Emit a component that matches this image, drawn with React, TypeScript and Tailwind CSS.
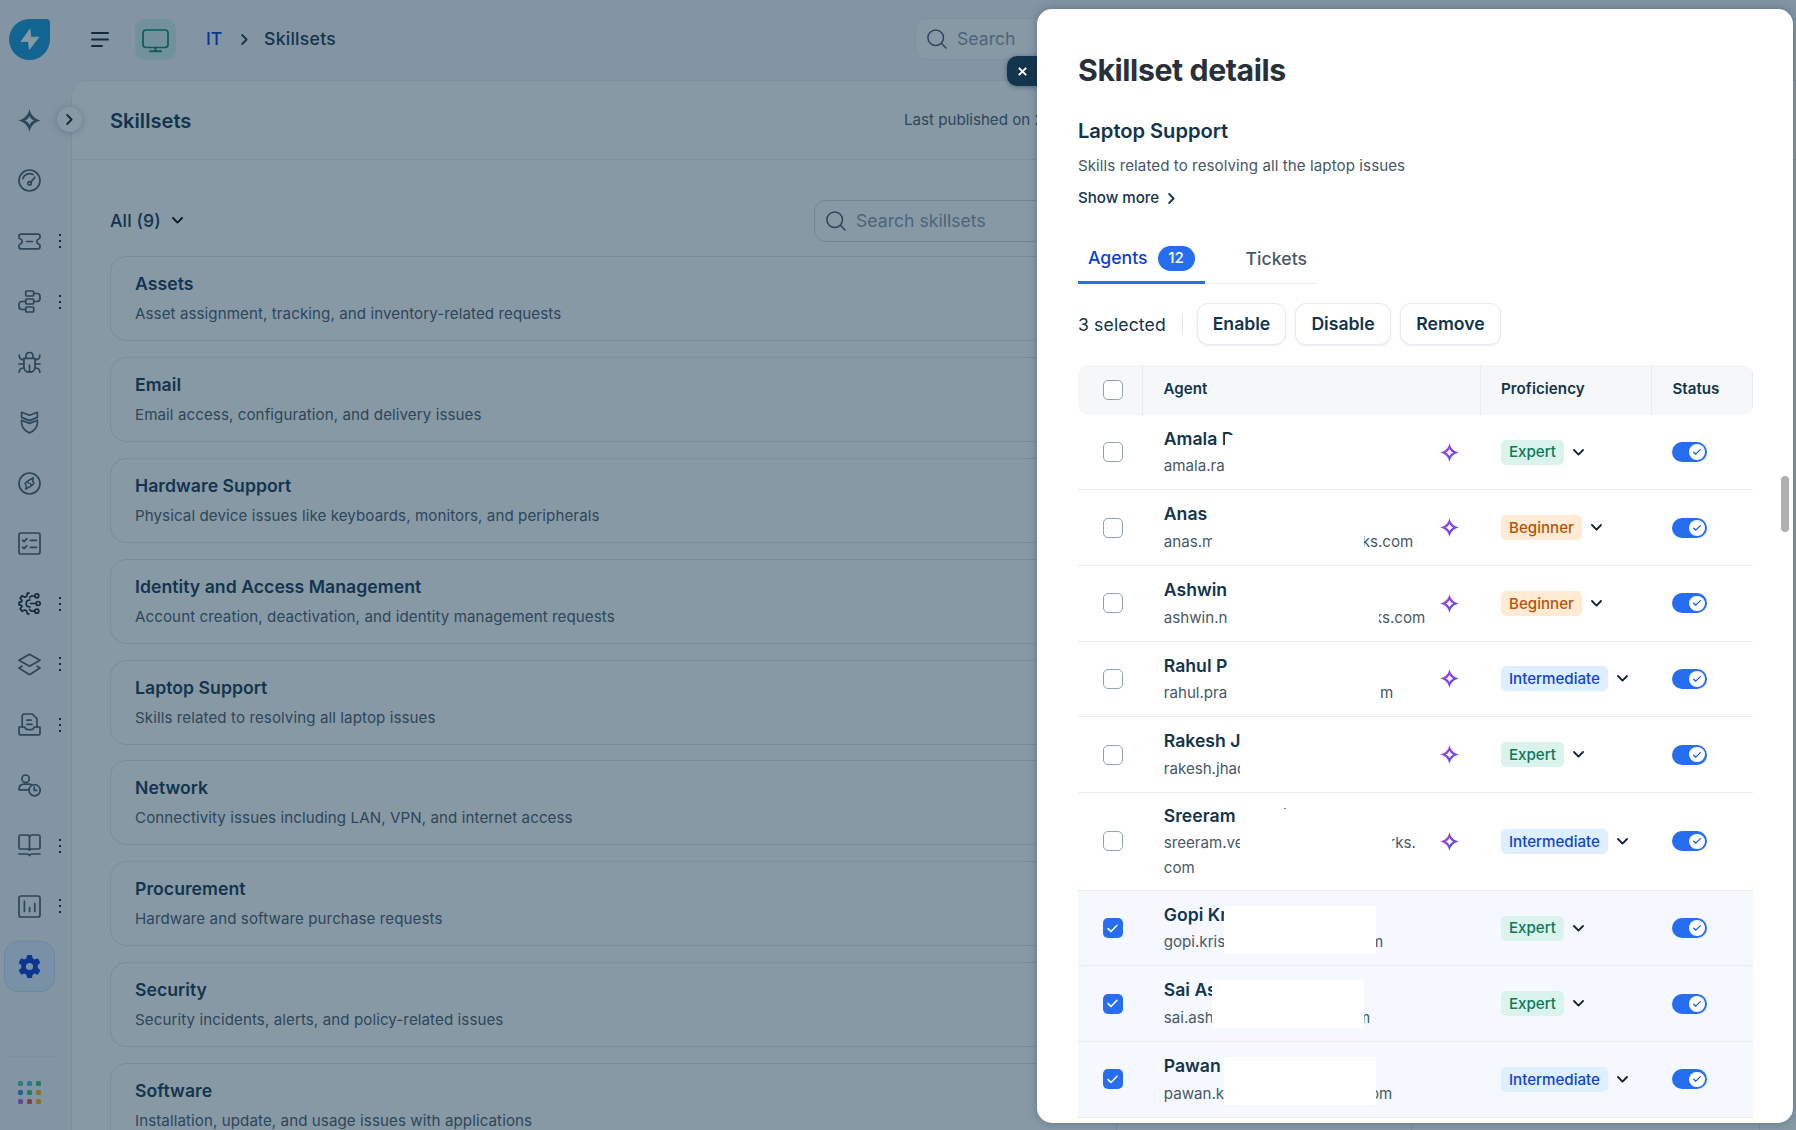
import React from "react";

const svgProps = {
  fill: "none",
  stroke: "currentColor",
  strokeWidth: 1.7,
  strokeLinecap: "round" as const,
  strokeLinejoin: "round" as const,
};

function Icon({ children }: { children: React.ReactNode }) {
  return (
    <svg width="23" height="23" viewBox="0 0 23 23" {...svgProps}>
      {children}
    </svg>
  );
}

const STAR =
  "M11.5 0C12.7 6.2 16.8 10.3 23 11.5C16.8 12.7 12.7 16.8 11.5 23C10.3 16.8 6.2 12.7 0 11.5C6.2 10.3 10.3 6.2 11.5 0ZM11.5 6.9C10.6 9.1 9.1 10.6 6.9 11.5C9.1 12.4 10.6 13.9 11.5 16.1C12.4 13.9 13.9 12.4 16.1 11.5C13.9 10.6 12.4 9.1 11.5 6.9Z";

const nav: { name: string; dots?: boolean; dark?: boolean; icon: React.ReactNode }[] = [
  {
    name: "Copilot",
    icon: <path d={STAR} fill="currentColor" fillRule="evenodd" stroke="none" />,
  },
  {
    name: "Dashboard",
    icon: (
      <>
        <circle cx="11.5" cy="11.5" r="10.5" />
        <path d="M4.8 9.6A7 7 0 0 1 15 5.6M16.8 8.2l-4 5" />
        <circle cx="11.6" cy="14.3" r="1.7" />
      </>
    ),
  },
  {
    name: "Tickets",
    dots: true,
    icon: (
      <>
        <path d="M1 6.2Q1 4.2 3 4.2H20Q22 4.2 22 6.2V7.4Q22 8.6 20.6 9Q18.9 9.6 18.9 11.5Q18.9 13.4 20.6 14Q22 14.4 22 15.6V16.8Q22 18.8 20 18.8H3Q1 18.8 1 16.8V15.6Q1 14.4 2.4 14Q4.1 13.4 4.1 11.5Q4.1 9.6 2.4 9Q1 8.6 1 7.4Z" />
        <path d="M8.6 11.5H14.4" />
      </>
    ),
  },
  {
    name: "Workflows",
    dots: true,
    icon: (
      <>
        <rect x="7.7" y="1" width="8" height="5" rx="1" />
        <rect x="7.7" y="9" width="8" height="5" rx="1" />
        <rect x="7.7" y="17" width="8" height="5" rx="1" />
        <path d="M15.7 3.5H19Q22 3.5 22 6.5V8.5Q22 11.5 19 11.5H15.7M7.7 11.5H4Q1 11.5 1 14.5V16.5Q1 19.5 4 19.5H7.7" />
      </>
    ),
  },
  {
    name: "Problems",
    icon: (
      <>
        <path d="M5.9 7.3H17.1V15.5Q17.1 21.2 11.5 21.2Q5.9 21.2 5.9 15.5ZM8 7.3V5Q8 1.5 11.5 1.5Q15 1.5 15 5V7.3M11.5 14V21" />
        <path d="M1.2 4.2Q1.2 8.8 5.9 8.8M21.8 4.2Q21.8 8.8 17.1 8.8M1 13H5.9M22 13H17.1M1.2 21.2Q1.2 17 5.9 17M21.8 21.2Q21.8 17 17.1 17" />
      </>
    ),
  },
  {
    name: "Changes",
    icon: (
      <>
        <path d="M3.6 1.3L11.5 4.3L19.4 1.3V6.4L11.5 9.6L3.6 6.4Z" />
        <path d="M3.6 9.2L11.5 12.4L19.4 9.2V12Q19 18.5 11.5 22Q4 18.5 3.6 12Z" />
      </>
    ),
  },
  {
    name: "Releases",
    icon: (
      <>
        <circle cx="11.5" cy="11.5" r="10.5" />
        <path d="M15.3 5.6L14.6 9L16 11.2L13.8 13.5L7.7 17.2L8.4 13.8L7 11.6L9.2 9.3ZM9.2 9.3L10.8 11.2M13.8 13.5L12.3 11.6" strokeWidth="1.5" />
      </>
    ),
  },
  {
    name: "Tasks",
    icon: (
      <>
        <rect x="1" y="1" width="21" height="21" rx="2" />
        <path d="M4.5 8.2L6 9.7L9 6.6M12.3 8.3H18.5M4.5 15.2L6 16.7L9 13.6M12.3 15.3H18.5" />
      </>
    ),
  },
  {
    name: "Automation",
    dots: true,
    dark: true,
    icon: (
      <>
        <path d="M11 1.2H9.4L8.7 4.2L6.7 5.2L4 3.8L2.2 6.3L4 8.5L3.4 9.8L1 10.3V12.8L3.4 13.3L4 14.6L2.2 16.8L4 19.3L6.7 17.9L8.7 18.9L9.4 21.8H11" />
        <path d="M12 8Q8.2 8 8.2 11.5Q8.2 15 12 15M12.5 11.5H18.3M13.2 4H16.8M13.2 19.2H16.8M11.6 5.8L13.2 4M11.6 17.4L13.2 19.2" />
        <circle cx="18.8" cy="3.8" r="2" />
        <circle cx="20.2" cy="11.5" r="2" />
        <circle cx="18.8" cy="19.2" r="2" />
      </>
    ),
  },
  {
    name: "Assets",
    dots: true,
    icon: (
      <>
        <path d="M11.5 1.2L22 7.3L11.5 13.2L1 7.3Z" />
        <path d="M4 13.2L1 15L11.5 21.7L22 15L19 13.2" />
      </>
    ),
  },
  {
    name: "Purchases",
    dots: true,
    icon: (
      <>
        <path d="M4.2 14V3.2Q4.2 1 6.4 1H14.2L19 5.6V14" />
        <path d="M1 14H6.8Q7.5 16.6 10 16.6H13Q15.5 16.6 16.2 14H22V20.4Q22 21.9 20.5 21.9H2.5Q1 21.9 1 20.4Z" />
        <path d="M9 7.2H13M9 11.4H14" />
      </>
    ),
  },
  {
    name: "On-call",
    icon: (
      <>
        <circle cx="7.6" cy="4.7" r="3.7" />
        <circle cx="16.6" cy="16.2" r="5.6" />
        <path d="M13.6 10.6Q12.6 10.2 10.6 10.2H6Q1 10.2 1 15.8H10.6M16.2 13V16.4H18.8" />
      </>
    ),
  },
  {
    name: "Solutions",
    dots: true,
    icon: (
      <>
        <path d="M11.5 3.4Q11.5 1 9 1H2.5Q1 1 1 2.5V13.6Q1 15 2.5 15H9.5L11.5 16L13.5 15H20.5Q22 15 22 13.6V2.5Q22 1 20.5 1H14Q11.5 1 11.5 3.4V16M1 20H9.3Q10.3 20 11.5 21.6Q12.7 20 13.7 20H22" />
      </>
    ),
  },
  {
    name: "Analytics",
    dots: true,
    icon: (
      <>
        <rect x="1" y="1" width="21" height="21" rx="2" />
        <path d="M6.4 6V16.4M11.6 12.6V16.4M16.8 8.6V16.4" />
      </>
    ),
  },
];

const cards = [
  ["Assets", "Asset assignment, tracking, and inventory-related requests"],
  ["Email", "Email access, configuration, and delivery issues"],
  ["Hardware Support", "Physical device issues like keyboards, monitors, and peripherals"],
  ["Identity and Access Management", "Account creation, deactivation, and identity management requests"],
  ["Laptop Support", "Skills related to resolving all laptop issues"],
  ["Network", "Connectivity issues including LAN, VPN, and internet access"],
  ["Procurement", "Hardware and software purchase requests"],
  ["Security", "Security incidents, alerts, and policy-related issues"],
  ["Software", "Installation, update, and usage issues with applications"],
];

type Level = "Expert" | "Beginner" | "Intermediate";

interface Agent {
  name: string;
  mail: string;
  tail?: string;
  // right edge of the trailing part of the address, from the left of the text column
  tailEnd?: string;
  mask: string;
  level: Level;
  ai?: boolean;
  checked?: boolean;
  tall?: boolean;
}

const agents: Agent[] = [
  { name: "Amala D", mail: "amala.ra", mask: "left-[61px] top-[20px]", level: "Expert", ai: true },
  { name: "Anas", mail: "anas.m", tail: "ks.com", tailEnd: "w-[249.5px]", mask: "left-[48px] top-[14px]", level: "Beginner", ai: true },
  { name: "Ashwin", mail: "ashwin.n", tail: "ks.com", tailEnd: "w-[261.5px]", mask: "left-[63px] top-[14px]", level: "Beginner", ai: true },
  { name: "Rahul P", mail: "rahul.pra", tail: "m", tailEnd: "w-[229.5px]", mask: "left-[63px] top-[14px]", level: "Intermediate", ai: true },
  { name: "Rakesh J", mail: "rakesh.jhad", mask: "left-[76px] top-[14px]", level: "Expert", ai: true },
  { name: "Sreeram", mail: "sreeram.ve", tail: "rks.", tailEnd: "w-[252px]", mask: "left-[76px] top-[17px]", level: "Intermediate", ai: true, tall: true },
  { name: "Gopi Kr", mail: "gopi.kris", tail: "m", tailEnd: "w-[219.5px]", mask: "left-[60px] top-[15px]", level: "Expert", checked: true },
  { name: "Sai As", mail: "sai.ash", tail: "m", tailEnd: "w-[206.5px]", mask: "left-[48px] top-[13.4px]", level: "Expert", checked: true },
  { name: "Pawan", mail: "pawan.k", tail: "om", tailEnd: "w-[228.5px]", mask: "left-[60px] top-[15px]", level: "Intermediate", checked: true },
];

const levelStyle: Record<Level, string> = {
  Expert: "bg-[#daf3ec] text-[#0a7b58] w-[63px]",
  Beginner: "bg-[#ffebd3] text-[#b4540a] w-[81px]",
  Intermediate: "bg-[#deefff] text-[#1143d0] w-[107px]",
};

function ChevronDown() {
  return (
    <svg width="11" height="7" viewBox="0 0 11 7" {...svgProps} strokeWidth="1.8">
      <path d="M1 1L5.5 5.6L10 1" />
    </svg>
  );
}

function ChevronRight() {
  return (
    <svg width="7" height="11" viewBox="0 0 7 11" {...svgProps} strokeWidth="1.8">
      <path d="M1.2 1L5.6 5.5L1.2 10" />
    </svg>
  );
}

function SearchIcon() {
  return (
    <svg width="20" height="20" viewBox="0 0 20 20" {...svgProps} strokeWidth="1.5">
      <circle cx="8.7" cy="8.7" r="7.8" />
      <path d="M14.3 14.3L19 19" />
    </svg>
  );
}

function Checkbox({ checked }: { checked?: boolean }) {
  return checked ? (
    <span className="flex size-5 items-center justify-center rounded-[5px] bg-[#266df0]">
      <svg width="11" height="9" viewBox="0 0 11 9" className="text-white" {...svgProps} strokeWidth="1.5">
        <path d="M1 4.6L4 7.4L10 1.2" />
      </svg>
    </span>
  ) : (
    <span className="block size-5 rounded-[5px] border border-[#90a0b0] bg-white" />
  );
}

function Toggle() {
  return (
    <span className="flex h-5 w-[35px] items-center justify-end rounded-full bg-[#266df0] pr-[2.5px]">
      <span className="flex size-[15.5px] items-center justify-center rounded-full bg-white">
        <svg width="8" height="6" viewBox="0 0 8 6" className="text-[#1556d6]" {...svgProps} strokeWidth="1.2">
          <path d="M0.7 3.2L2.8 5.2L7.3 0.7" />
        </svg>
      </span>
    </span>
  );
}

function AiStar() {
  return (
    <svg width="19" height="19" viewBox="0 0 23 23">
      <defs>
        <linearGradient id="ai" x1="0" y1="0" x2="1" y2="1">
          <stop offset="0.25" stopColor="#a63fd8" />
          <stop offset="0.75" stopColor="#5b4df0" />
        </linearGradient>
      </defs>
      <path d={STAR} fill="url(#ai)" fillRule="evenodd" />
    </svg>
  );
}

function Sidebar() {
  return (
    <aside className="flex w-[70.5px] shrink-0 flex-col bg-[#f5f7f9] text-[#475867]">
      <div className="flex h-[90px] pt-[19px] pl-[9px]">
        <svg width="41" height="41" viewBox="0 0 41 41">
          <path d="M20.5 0H37Q41 0 41 4V20.5A20.5 20.5 0 1 1 20.5 0Z" fill="#1297d4" />
          <path d="M21 10.2L12 22.4H19.4L20.4 30.4L29.8 18.2H21.8Z" fill="#fff" stroke="#fff" strokeWidth="0.8" strokeLinejoin="round" />
        </svg>
      </div>
      {nav.map((n) => (
        <div key={n.name} className={n.dark ? "flex h-[60.48px] items-center pl-[18px] text-[#12232f]" : "flex h-[60.48px] items-center pl-[18px]"}>
          <Icon>{n.icon}</Icon>
          {n.dots && (
            <span className="ml-[18px] flex flex-col gap-[4px] text-[#12232f]">
              <i className="size-[2px] bg-current" />
              <i className="size-[2px] bg-current" />
              <i className="size-[2px] bg-current" />
            </span>
          )}
        </div>
      ))}
      <div className="flex h-[60.48px] items-center pl-[4px]">
        <div className="flex size-[51px] items-center justify-center rounded-[14px] border border-[#bfdcff] bg-[#deeeff]">
          <svg width="23" height="23" viewBox="0 0 23 23" className="text-[#0238d6]">
            <path
              d="M8.9 0.8Q9 0 9.9 0H13.1Q14 0 14.1 0.8L14.6 3.3L16.6 4.4L19 3.5Q19.8 3.2 20.3 4L22 6.9Q22.4 7.6 21.8 8.2L19.8 10V13L21.8 14.8Q22.4 15.4 22 16.1L20.3 19Q19.8 19.8 19 19.5L16.6 18.6L14.6 19.7L14.1 22.2Q14 23 13.1 23H9.9Q9 23 8.9 22.2L8.4 19.7L6.4 18.6L4 19.5Q3.2 19.8 2.7 19L1 16.1Q0.6 15.4 1.2 14.8L3.2 13V10L1.2 8.2Q0.6 7.6 1 6.9L2.7 4Q3.2 3.2 4 3.5L6.4 4.4L8.4 3.3ZM11.5 7.9A3.6 3.6 0 1 0 11.5 15.1A3.6 3.6 0 1 0 11.5 7.9Z"
              fill="currentColor"
              fillRule="evenodd"
            />
          </svg>
        </div>
      </div>
      <div className="mt-[59px] ml-1 h-px w-[51px] bg-[#e6ecf4]" />
      <div className="mt-[24px] ml-[18px] grid w-[23px] grid-cols-3 gap-[4px]">
        <i className="size-[5px] rounded-[1.5px] bg-[#4cc9a0]" />
        <i className="size-[5px] rounded-[1.5px] bg-[#35c4e8]" />
        <i className="size-[5px] rounded-[1.5px] bg-[#3fbc6c]" />
        <i className="size-[5px] rounded-[1.5px] bg-[#3790dc]" />
        <i className="size-[5px] rounded-[1.5px] bg-[#2fc47c]" />
        <i className="size-[5px] rounded-[1.5px] bg-[#f5b800]" />
        <i className="size-[5px] rounded-[1.5px] bg-[#b45fd8]" />
        <i className="size-[5px] rounded-[1.5px] bg-[#f04848]" />
        <i className="size-[5px] rounded-[1.5px] bg-[#f5b000]" />
      </div>
    </aside>
  );
}

function Main() {
  return (
    <div className="flex min-w-0 flex-1 flex-col">
      <header className="flex h-20 shrink-0 items-start pl-[20.5px]">
        <svg width="18" height="17" viewBox="0 0 18 17" className="mt-[31px] text-[#12232f]" {...svgProps} strokeWidth="2">
          <path d="M1 2H17M1 8.5H17M1 15H11" />
        </svg>
        <span className="mt-[19px] ml-[26px] flex size-[41px] items-center justify-center rounded-[10px] bg-[#d0f0ea] text-[#008766]">
          <svg width="27" height="24" viewBox="0 0 27 24" className="mt-[3px]" {...svgProps}>
            <rect x="1" y="1" width="25" height="17.5" rx="3" />
            <path d="M13.5 18.5V22M8 22.3H19" strokeWidth="2" />
          </svg>
        </span>
        <div className="mt-[26.4px] ml-[30px] flex h-[26px] items-center text-[17.64px] font-medium text-[#12344d]">
          <span className="w-[34.5px] text-[#0238d6]">IT</span>
          <ChevronRight />
          <span className="ml-[16.5px] tracking-[0.25px]">Skillsets</span>
        </div>
        <div className="mt-[18px] ml-auto flex h-[42px] w-[480px] items-center rounded-xl border border-[#e8edf2] bg-white pl-[11px] text-[17.64px] text-[#8496a8]">
          <span className="text-[#475867]">
            <SearchIcon />
          </span>
          <span className="ml-[10px] pt-px">Search</span>
        </div>
        <div className="w-[401px] shrink-0" />
      </header>
      <section className="relative flex flex-1 flex-col overflow-visible rounded-tl-2xl border-t border-l border-[#e6ebf2] bg-white">
        <span className="absolute top-[26px] -left-[14.5px] flex size-[25px] items-center justify-center rounded-full bg-white text-[#12232f] shadow-[0_1px_8px_rgba(18,52,77,0.3)]">
          <ChevronRight />
        </span>
        <div className="flex h-[79px] items-center border-b border-[#e8edf2] pl-[38.5px]">
          <h1 className="pt-[2px] text-[20.16px] font-semibold text-[#12344d]">Skillsets</h1>
          <div className="ml-auto flex w-[892px] text-[15.12px] text-[#475867]">
            Last published on&nbsp;21 Aug 2025
          </div>
        </div>
        <div className="flex flex-1 flex-col pr-9 pl-[38.5px]">
          <div className="mt-[39.6px] flex h-[42px] items-center">
            <span className="mr-[11px] pt-[2px] text-[17.64px] font-medium tracking-[0.1px] text-[#12344d]">All (9)</span>
            <ChevronDown />
            <div className="ml-auto flex h-[42px] w-[946px] items-center rounded-xl border border-[#cfd7df] pl-[11px] text-[17.64px] text-[#8496a8]">
              <span className="text-[#475867]">
                <SearchIcon />
              </span>
              <span className="ml-[10px] pt-px">Search skillsets</span>
            </div>
          </div>
          <div className="mt-[14.8px] flex flex-col gap-[15.8px]">
            {cards.map(([t, d]) => (
              <article key={t} className="flex h-[85px] shrink-0 rounded-2xl border border-[#dde4ec]">
                <div className="flex w-[1006px] flex-col gap-[8px] border-r border-[#dde4ec] pt-[15px] pl-6">
                  <h2 className="text-[17.64px]/6 font-semibold tracking-[0.04px] text-[#12344d]">{t}</h2>
                  <p className="text-[15.12px]/5 tracking-[0.09px] text-[#475867]">{d}</p>
                </div>
                <div className="w-[294.5px] border-r border-[#dde4ec]" />
              </article>
            ))}
          </div>
        </div>
      </section>
    </div>
  );
}

function AgentRow({ a }: { a: Agent }) {
  return (
    <div
      className={
        "flex shrink-0 items-center border-b border-[#e9edf2] " +
        (a.tall ? "h-[98px] " : "h-[75.6px] ") +
        (a.checked ? "bg-[#f5f9ff]" : "bg-white")
      }
    >
      <div className="w-[64.5px] pl-[25px]">
        <Checkbox checked={a.checked} />
      </div>
      <div className={"relative h-full w-[338px] pl-[21.3px] " + (a.tall ? "pt-[11px]" : "pt-[12px]")}>
        <div className="text-[17.64px]/6 font-semibold text-[#12344d]">{a.name}</div>
        <div className="relative mt-[2.5px] text-[15.12px]/[25px] text-[#475867]">
          {a.mail}
          {a.tail && <span className={"absolute top-0 left-0 text-right " + a.tailEnd}>{a.tail}</span>}
        </div>
        {a.tall && <div className="text-[15.12px]/[25px] text-[#475867]">com</div>}
        <span className={"absolute ml-[21.5px] h-[48px] w-[152px] bg-white " + a.mask} />
        {a.tall && <span className="absolute top-[15px] left-[142px] h-px w-[2px] bg-[#6f8494]" />}
        {a.ai && (
          <span className="absolute inset-y-0 left-[298px] flex items-center">
            <AiStar />
          </span>
        )}
      </div>
      <div className="flex w-[171px] items-center gap-[9.5px] pl-[20.5px] text-[#12232f]">
        <span className={"flex h-[25px] items-center justify-center rounded-[5px] pt-px text-[15.12px] font-medium " + levelStyle[a.level]}>
          {a.level}
        </span>
        <ChevronDown />
      </div>
      <div className="pl-[21px]">
        <Toggle />
      </div>
    </div>
  );
}

function Sheet() {
  const action =
    "flex h-[42px] items-center justify-center rounded-[11px] border border-[#e6ebf2] bg-white pt-px text-[17.64px] font-semibold text-[#12344d] shadow-[0_1px_2px_rgba(18,52,77,0.08)] ";
  return (
    <>
      <button className="absolute top-[56px] left-[1007px] flex h-[30px] w-10 items-center rounded-l-[10px] bg-[#12344d] pl-[11px] text-white shadow-[0_1px_5px_rgba(18,52,77,0.5)]">
        <svg width="9" height="9" viewBox="0 0 9 9" {...svgProps} strokeWidth="1.9" strokeLinecap="butt">
          <path d="M0.8 0.8L8.2 8.2M8.2 0.8L0.8 8.2" />
        </svg>
      </button>
      <aside className="absolute top-[9px] left-[1037.4px] flex h-[1114px] w-[756px] flex-col overflow-hidden rounded-[15px] bg-white pl-[40.6px] shadow-[0_0_10px_rgba(18,52,77,0.35)]">
        <h2 className="mt-[42px] text-[30.24px]/[38px] font-bold tracking-[-0.4px] text-[#283039]">Skillset details</h2>
        <h3 className="mt-[27px] text-[20.16px]/[30px] font-semibold tracking-[-0.05px] text-[#12344d]">Laptop Support</h3>
        <p className="mt-[8px] text-[15.12px]/6 tracking-[0.075px] text-[#475867]">Skills related to resolving all the laptop issues</p>
        <button className="mt-[8px] flex h-6 items-center gap-[9px] text-[15.12px] font-medium text-[#12344d]">
          Show more <ChevronRight />
        </button>
        <div className="mt-[24px] flex h-[50px] w-[239px] text-[17.64px] shadow-[inset_0_-1px_0_#ebeff3]">
          <div className="flex w-[127px] items-center gap-[10px] border-b-[3px] border-[#266df0] pt-[2px] pl-[10px] font-medium text-[#0a3fd6]">
            Agents
            <span className="flex h-[25px] w-[37px] items-center justify-center rounded-full bg-[#266df0] text-[15.12px] text-white">12</span>
          </div>
          <div className="flex items-center pl-[40.5px] font-medium tracking-[0.05px] text-[#475867]">Tickets</div>
        </div>
        <div className="mt-[19px] flex h-[42px] items-center text-[17.64px] text-[#12344d]">
          <span className="w-[104px] pt-[2px] tracking-[0.12px]">3 selected</span>
          <span className="h-5 w-px bg-[#dde3ea]" />
          <div className="ml-[14px] flex gap-[9px]">
            <button className={action + "w-[89px]"}>Enable</button>
            <button className={action + "w-[96px]"}>Disable</button>
            <button className={action + "w-[101px]"}>Remove</button>
          </div>
        </div>
        <div className="mt-[19.5px] flex w-[675px] shrink-0 flex-col">
          <div className="flex h-[50.4px] shrink-0 items-center overflow-hidden rounded-[10px] bg-[#f5f7f9] text-[15.12px] font-semibold text-[#12344d]">
            <div className="flex h-full w-[65px] items-center border-r border-[#e6ebf2] pl-[25px]">
              <Checkbox />
            </div>
            <div className="flex h-full w-[338px] items-center border-r border-[#e6ebf2] pl-[20.5px]">Agent</div>
            <div className="flex h-full w-[171px] items-center border-r border-[#e6ebf2] pl-[20px] tracking-[0.08px]">Proficiency</div>
            <div className="flex h-full flex-1 items-center border-r border-[#e6ebf2] pl-[20.5px]">Status</div>
          </div>
          {agents.map((a) => (
            <AgentRow key={a.name} a={a} />
          ))}
        </div>
        <div className="absolute top-[467px] right-[4px] h-[56px] w-2 rounded-full bg-[#b0b0b0]" />
      </aside>
    </>
  );
}

export default function App() {
  return (
    <div className="relative flex h-[1130px] w-[1796px] overflow-hidden bg-[#f5f7f9] font-['Inter',sans-serif]">
      <Sidebar />
      <Main />
      <div className="absolute inset-0 bg-[#12344d]/50" />
      <Sheet />
    </div>
  );
}
